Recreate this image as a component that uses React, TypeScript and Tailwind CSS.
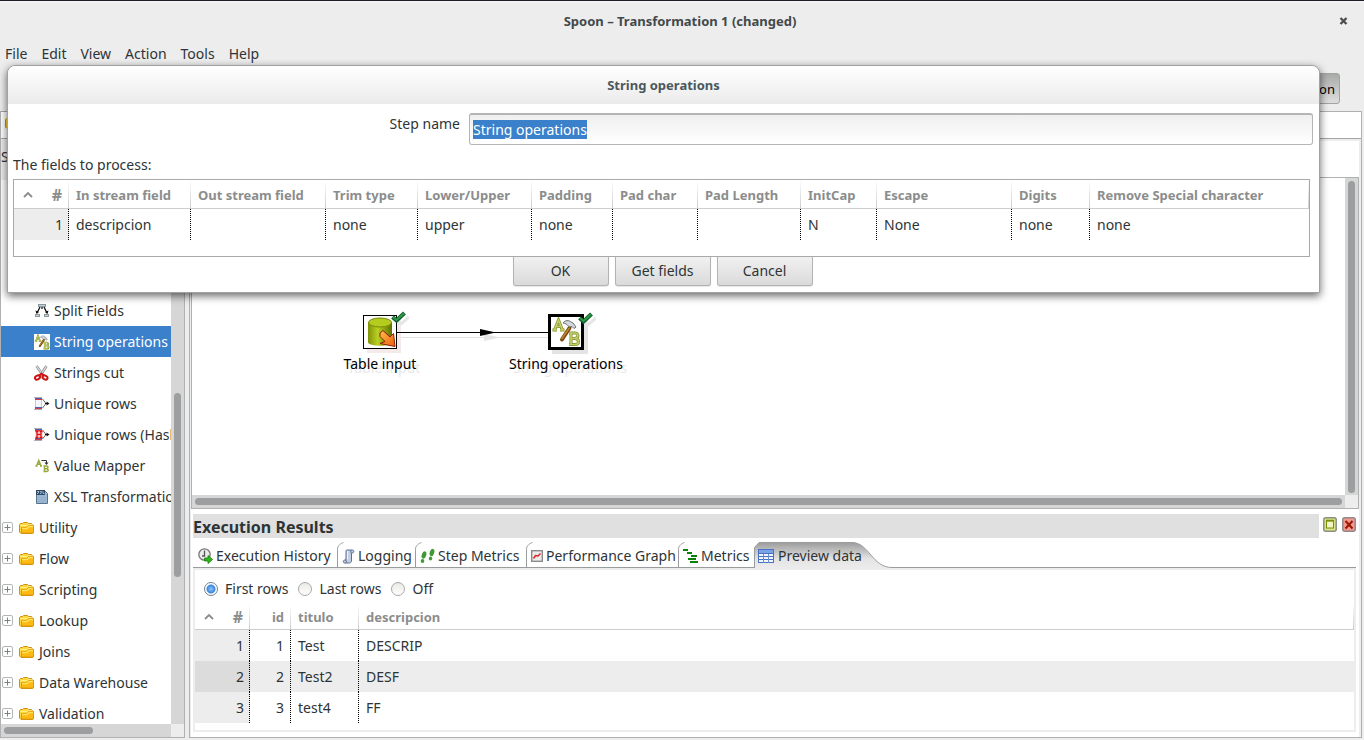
import { useEffect, useRef, type ReactNode } from "react";

function FolderIcon() {
  return (
    <svg width="16" height="14" viewBox="0 0 16 14" className="shrink-0" aria-hidden="true">
      <path d="M.5 11V3.500L1.500 2.500H3.500L4.500 1.500H8.500L9.500 2.500H12.500L13.500 4.500H14.500V11.500L13.500 12.500H2Z" fill="#ffd83c" stroke="#cf8f0c" />
      <path d="M1.500 4.500H7.500L9.500 3.500H12.500" fill="none" stroke="#fff08a" />
      <path d="M2.500 12V6.500H7.500L9.500 4.500H14.500V12Z" fill="#ffb914" stroke="#dd9a0c" />
      <path d="M3 7.500H8L10 5.500H14" fill="none" stroke="#ffe35c" strokeWidth="1.500" />
    </svg>
  );
}

function ExpanderIcon() {
  return (
    <svg width="11" height="11" viewBox="0 0 11 11" className="shrink-0" aria-hidden="true">
      <rect x=".5" y=".5" width="10" height="10" rx="1.5" fill="#fff" stroke="#b4b6b5" />
      <path d="M2.500 5.500H8.500M5.500 2.500V8.500" stroke="#7d7f7e" />
    </svg>
  );
}

function SplitIcon() {
  return (
    <svg width="16" height="16" viewBox="0 0 16 16" aria-hidden="true">
      <rect x="4.500" y="1.500" width="7" height="2" fill="#c9d2d8" stroke="#8b979e" />
      <path d="M6 4L3 10M10 4L13 10M8 4V6" stroke="#111" strokeWidth="1.300" />
      <path d="M1.500 7.500L5 9L2.500 11ZM14.500 7.500L11 9L13.500 11Z" fill="#111" />
      <rect x="1.500" y="11.500" width="4" height="2" fill="#c9d2d8" stroke="#8b979e" />
      <rect x="10.500" y="11.500" width="4" height="2" fill="#c9d2d8" stroke="#8b979e" />
    </svg>
  );
}

function StringOpsIcon({ size }: { size: number }) {
  return (
    <svg width={size} height={size} viewBox="0 0 30 30" className="bg-white" aria-hidden="true">
      <g fill="none" stroke="#7c8a30" strokeWidth="3">
        <path d="M3.500 13L7.500 3L11.500 13M5 9.500H10M1.500 13H6M9 13H13.500" />
        <path d="M20 16V27.500M18 16H24C28 16 28 21 23.500 21.500H20M23.500 21.500C29 22 28.500 27.500 24 27.500H18" />
      </g>
      <g fill="none" stroke="#c3cf62" strokeWidth="1.700">
        <path d="M3.500 13L7.500 3L11.500 13M5 9.500H10M1.500 13H6M9 13H13.500" />
        <path d="M20 16V27.500M18 16H24C28 16 28 21 23.500 21.500H20M23.500 21.500C29 22 28.500 27.500 24 27.500H18" />
      </g>
      <path d="M18.500 11L11 22.500" stroke="#7a4b10" strokeWidth="4" strokeLinecap="round" />
      <path d="M18 11.500L11 21.500" stroke="#b98432" strokeWidth="1.600" strokeLinecap="round" />
      <path d="M12 6C14 3 18 3 20 5L22 6L25 10L23 11.500L21 9.500L18 10C16 7 14.500 6.500 12 6Z" fill="#d5d9db" stroke="#6a7072" />
    </svg>
  );
}

function ScissorsIcon() {
  return (
    <svg width="16" height="16" viewBox="0 0 16 16" fill="none" aria-hidden="true">
      <path d="M2.500 1L9.500 11M12.500 1L6 11" stroke="#8b8f90" strokeWidth="2.600" />
      <path d="M2.500 1L9 10M12.500 1L6.500 10" stroke="#dfe2e3" strokeWidth="1.200" />
      <ellipse cx="3.500" cy="12.500" rx="2.600" ry="1.900" stroke="#cc1414" strokeWidth="2" transform="rotate(-28 3.500 12.500)" />
      <ellipse cx="11" cy="12.500" rx="2.600" ry="1.900" stroke="#cc1414" strokeWidth="2" transform="rotate(28 11 12.500)" />
      <path d="M4.500 11L7.500 8.500L10.500 11" stroke="#cc1414" strokeWidth="1.800" />
    </svg>
  );
}

function UniqueIcon({ hash }: { hash?: boolean }) {
  return (
    <svg width="16" height="16" viewBox="0 0 16 16" fill="none" aria-hidden="true">
      <rect x="1.500" y="1.500" width="6" height="12" fill="#f4f6fa" stroke="#c5cad3" />
      <path d="M0 1.500H8M0 13.500H8" stroke="#a8adb8" />
      <path d="M1 2.500H8M1 11.500H8" stroke="#4d62b5" />
      <path d="M1 3.500H8M1 12.500H8" stroke="#dc3a48" />
      <path d="M8.500 3L12 7.500L8.500 12" stroke="#666" />
      <path d="M11 7.500H13" stroke="#111" />
      <path d="M12.500 5.500L15.500 7.500L12.500 9.500Z" fill="#111" />
      {hash && (
        <>
          <rect x="1" y="4" width="8" height="7" fill="#ffe1e1" />
          <path d="M3 4.500V10.500M7 4.500V10.500M3 7.500H7M1.500 4.500H4.500M5.500 4.500H8.500M1.500 10.500H4.500M5.500 10.500H8.500" stroke="#df1010" strokeWidth="1.300" />
        </>
      )}
    </svg>
  );
}

function MapperIcon() {
  return (
    <svg width="16" height="16" viewBox="0 0 16 16" fill="none" aria-hidden="true">
      <path d="M2.500 8L4.800 2.500L7 8M3.500 6.200H6M1.500 8H3.500M6 8H8" stroke="#98a83a" strokeWidth="1.500" />
      <path d="M10.500 8V13.500M9.500 8H12.500C14.500 8 14.300 10.500 12.500 10.700H10.500M12.500 10.700C15 11 14.500 13.500 12.500 13.500H9.500" stroke="#98a83a" strokeWidth="1.500" />
      <path d="M7.500 2.500H12.500V5" stroke="#333" />
      <path d="M10.500 4.500H14.500L12.500 7Z" fill="#333" />
    </svg>
  );
}

function XslIcon() {
  return (
    <svg width="16" height="16" viewBox="0 0 16 16" fill="none" aria-hidden="true">
      <path d="M2.500 1.500H10.500L13.500 4.500V14.500H2.500Z" fill="#9db8d2" stroke="#56718c" />
      <rect x="2" y="1" width="9" height="5" fill="#2c4a66" />
      <path d="M3 2.500H5L4 4.500H3M6 2.500H7.500L7 4.500H6M9 2V4.500H10.500" stroke="#b9cede" strokeWidth=".8" />
      <path d="M4 8.500H12M4 10.500H12M4 12.500H12" stroke="#94afca" />
    </svg>
  );
}

function CheckBadge() {
  return (
    <svg width="18" height="18" viewBox="0 0 18 18" fill="none" className="absolute -top-[5px] left-[27px]" aria-hidden="true">
      <path d="M6 9L10 13L18 6" stroke="#e6e6e6" strokeWidth="3" />
      <path d="M1.500 6L5.500 9.500L13.500 2" stroke="#125c28" strokeWidth="4" />
      <path d="M2 6L5.500 9L13 2.500" stroke="#2c9b48" strokeWidth="2" />
    </svg>
  );
}

function TableInputIcon() {
  return (
    <svg width="32" height="32" viewBox="0 0 32 32" aria-hidden="true">
      <defs>
        <linearGradient id="cyl">
          <stop offset="0" stopColor="#7f9306" />
          <stop offset=".4" stopColor="#b9d023" />
          <stop offset="1" stopColor="#5f7000" />
        </linearGradient>
        <linearGradient id="arr" x1="0" y1="0" x2="1" y2="1">
          <stop offset="0" stopColor="#ffc04a" />
          <stop offset="1" stopColor="#ee5a0c" />
        </linearGradient>
      </defs>
      <path d="M4 6V26C4 31 28 31 28 26V6Z" fill="url(#cyl)" />
      <ellipse cx="16" cy="6.500" rx="11.500" ry="4.500" fill="#b5cc1f" stroke="#768a05" />
      <path d="M16 17L19 14.500L26 21L29.500 17.500L31 30.500L16 27.500L21 25.500L16 20.500Z" fill="url(#arr)" stroke="#8d1f06" />
    </svg>
  );
}

const treeSteps: { label: string; icon: ReactNode; selected?: boolean }[] = [
  { label: "Split Fields", icon: <SplitIcon /> },
  { label: "String operations", icon: <StringOpsIcon size={16} />, selected: true },
  { label: "Strings cut", icon: <ScissorsIcon /> },
  { label: "Unique rows", icon: <UniqueIcon /> },
  { label: "Unique rows (HashSet)", icon: <UniqueIcon hash /> },
  { label: "Value Mapper", icon: <MapperIcon /> },
  { label: "XSL Transformation", icon: <XslIcon /> },
];

const treeFolders = ["Utility", "Flow", "Scripting", "Lookup", "Joins", "Data Warehouse", "Validation"];

function StepTree() {
  return (
    <aside className="flex w-[185px] shrink-0 flex-col border border-t-0 border-[#b0b2b2] bg-[#ededed]">
      <div className="h-7 shrink-0 border-y border-[#a4a6a6] bg-white py-1 pl-1">
        <FolderIcon />
      </div>
      <div className="h-[41px] shrink-0 pt-2">Steps</div>
      <div className="flex min-h-0 flex-1">
        <div className="flex min-w-0 flex-1 flex-col">
          <ul className="min-h-0 flex-1 overflow-hidden bg-white pt-[115px]">
            {treeSteps.map((s) => (
              <li
                key={s.label}
                className={
                  s.selected
                    ? "flex h-[31px] items-center gap-1 whitespace-nowrap bg-[#3a80cb] pl-[33px] text-white"
                    : "flex h-[31px] items-center gap-1 whitespace-nowrap pl-[33px]"
                }
              >
                <span className="shrink-0">{s.icon}</span>
                {s.label}
              </li>
            ))}
            {treeFolders.map((f) => (
              <li key={f} className="flex h-[31px] items-center whitespace-nowrap pl-px">
                <ExpanderIcon />
                <span className="ml-1.5 mr-1">
                  <FolderIcon />
                </span>
                {f}
              </li>
            ))}
          </ul>
          <div className="h-[13px] shrink-0 bg-[#d6d6d6] px-[3px] py-[3px]">
            <div className="h-[7px] w-[89px] rounded-full bg-[#9c9ea0]" />
          </div>
        </div>
        <div className="flex w-[13px] shrink-0 flex-col">
          <div className="flex-1 bg-[#d6d6d6] px-[3px] pt-[213px]">
            <div className="h-[184px] rounded-full bg-[#9c9ea0]" />
          </div>
          <div className="h-[13px] bg-[#ededed]" />
        </div>
      </div>
    </aside>
  );
}

function Canvas() {
  return (
    <div className="flex h-[332px] shrink-0 flex-col border border-[#b0b2b2] bg-white">
      <div className="flex min-h-0 flex-1">
        <div className="relative min-w-0 flex-1 overflow-hidden text-black">
          <div className="absolute left-[128px] top-[137px] flex w-[120px] flex-col items-center">
            <div className="relative border border-black bg-white shadow-[4px_4px_0_#f4eaea]">
              <TableInputIcon />
              <CheckBadge />
            </div>
            <span className="mt-[5px] [text-shadow:4px_4px_0_#e9e9e9]">Table input</span>
          </div>
          <svg width="160" height="20" viewBox="0 0 160 20" className="absolute left-[204px] top-[145px]" aria-hidden="true">
            <path d="M5 14.500H152" stroke="#e4e4e4" />
            <path d="M88 11L104 14.500L88 18Z" fill="#e4e4e4" />
            <path d="M0 9.500H153" stroke="#000" />
            <path d="M84 6L100 9.500L84 13Z" fill="#000" />
          </svg>
          <div className="absolute left-[314px] top-[136px] flex w-[120px] flex-col items-center">
            <div className="relative border-3 border-black bg-white shadow-[4px_4px_0_#e4e4e4]">
              <StringOpsIcon size={30} />
              <CheckBadge />
            </div>
            <span className="mt-1 whitespace-nowrap [text-shadow:4px_4px_0_#e9e9e9]">String operations</span>
          </div>
        </div>
        <div className="w-[13px] bg-[#d6d6d6] p-[3px]">
          <div className="h-[312px] rounded-full bg-[#9c9ea0]" />
        </div>
      </div>
      <div className="flex h-[13px] shrink-0">
        <div className="flex-1 bg-[#d6d6d6] p-[3px]">
          <div className="h-[7px] rounded-full bg-[#9c9ea0]" />
        </div>
        <div className="w-[13px] bg-[#ededed]" />
      </div>
    </div>
  );
}

function HistoryIcon() {
  return (
    <svg width="15" height="16" viewBox="0 0 15 16" fill="none" aria-hidden="true">
      <circle cx="6.500" cy="6.500" r="5.700" fill="#ececec" stroke="#777" strokeWidth="1.300" />
      <path d="M6.500 2.500V8H4" stroke="#555" strokeWidth="1.300" />
      <path d="M6.500 10H10V7.500L14.500 11.500L10 15.500V13H6.500Z" fill="#2fb61a" stroke="#187a0c" strokeWidth=".8" />
    </svg>
  );
}

function LogIcon() {
  return (
    <svg width="13" height="15" viewBox="0 0 13 15" fill="none" aria-hidden="true">
      <path d="M4 2C4 .8 5 1 6 1H10.500C12.500 1 12 4 10.500 4H9.500V11C9.500 14 8 14 7 14H3C.5 14 .8 11 3 11H4Z" fill="#c3cfe2" stroke="#5b6f90" />
      <path d="M5.500 2V10.500" stroke="#f2f5fa" />
      <path d="M9.500 4C8.500 4 8.500 2 9.500 1.500M3 11C5 11 5 13.500 3.500 14" stroke="#5b6f90" />
    </svg>
  );
}

function FeetIcon() {
  return (
    <svg width="15" height="16" viewBox="0 0 15 16" fill="#3f9a35" aria-hidden="true">
      <ellipse cx="4" cy="7" rx="2.200" ry="3.800" transform="rotate(18 4 7)" />
      <ellipse cx="2.500" cy="13" rx="1.800" ry="2" />
      <ellipse cx="12" cy="4.500" rx="2.200" ry="3.800" transform="rotate(18 12 4.500)" />
      <ellipse cx="10.500" cy="10.500" rx="1.700" ry="2" />
    </svg>
  );
}

function GraphIcon() {
  return (
    <svg width="12" height="12" viewBox="0 0 12 12" fill="none" aria-hidden="true">
      <rect x=".7" y=".7" width="10.600" height="10.600" fill="#ececec" stroke="#8a8a8a" strokeWidth="1.400" />
      <path d="M2.500 8.500L4.500 5.500L7 6L9.500 3.500" stroke="#e02020" strokeWidth="1.400" />
    </svg>
  );
}

function MetricsIcon() {
  return (
    <svg width="15" height="14" viewBox="0 0 15 14" shapeRendering="crispEdges" stroke="#078307" strokeWidth="2" aria-hidden="true">
      <path d="M0 1H5M4 4H9M8 7H14M5 10H13M7 13H15" />
    </svg>
  );
}

function GridIcon() {
  return (
    <svg width="16" height="14" viewBox="0 0 16 14" shapeRendering="crispEdges" aria-hidden="true">
      <rect x="0" y="0" width="16" height="14" fill="#4a72c4" />
      <rect x="1" y="1" width="14" height="3" fill="#7aa3e6" />
      <path d="M1 6H15M1 9H15M1 12H15" stroke="#f2f6ff" strokeWidth="2" />
      <path d="M5.500 5V14M10.500 5V14" stroke="#6b8fd6" />
    </svg>
  );
}

function Tab({ width, icon, first, children }: { width: string; icon: ReactNode; first?: boolean; children: ReactNode }) {
  return (
    <button
      type="button"
      role="tab"
      aria-selected="false"
      className={`relative flex h-[26px] shrink-0 items-center gap-[3px] whitespace-nowrap border-b border-[#9a9c9c] pl-[5px] pt-[3px] ${width}`}
    >
      {!first && (
        <svg width="8" height="26" viewBox="0 0 8 26" fill="none" className="absolute left-0 top-0" aria-hidden="true">
          <path d="M.5 26V7.500C.5 3 4 1.500 6.500 .5" stroke="#9a9c9c" />
        </svg>
      )}
      {icon}
      {children}
    </button>
  );
}

const dividerTh =
  "h-[26px] border-b border-[#cdcdcd] bg-[linear-gradient(to_bottom,#ffffff,#cccccc)] bg-[length:1px_100%] bg-right bg-no-repeat px-[7px] pt-px text-left text-[13px] font-bold text-[#8b8d8c]";

function SortIcon() {
  return (
    <svg width="10" height="6" viewBox="0 0 10 6" fill="none" aria-hidden="true">
      <path d="M1 5L5 1L9 5" stroke="#8b8d8c" strokeWidth="1.800" />
    </svg>
  );
}

function RowNumberHeader() {
  return (
    <th className={dividerTh}>
      <span className="flex items-center justify-between pl-0.5">
        <SortIcon />
        <span className="text-base leading-5">#</span>
      </span>
    </th>
  );
}

const previewRows = [
  ["1", "1", "Test", "DESCRIP"],
  ["2", "2", "Test2", "DESF"],
  ["3", "3", "test4", "FF"],
];

function PreviewTable() {
  return (
    <table className="w-full table-fixed border-separate border-spacing-0">
      <colgroup>
        <col className="w-[55px]" />
        <col className="w-[41px]" />
        <col className="w-[68px]" />
        <col />
      </colgroup>
      <thead>
        <tr>
          <RowNumberHeader />
          <th className={dividerTh}>
            <span className="block text-right">id</span>
          </th>
          <th className={dividerTh}>titulo</th>
          <th className={dividerTh}>descripcion</th>
        </tr>
      </thead>
      <tbody>
        {previewRows.map(([n, id, title, desc]) => (
          <tr key={n} className="group h-[31px] even:bg-[#ededed]">
            <td className="border-r border-dotted border-black bg-[#ededed] pr-[5px] text-right group-even:bg-[#dcdcdc]">{n}</td>
            <td className="border-r border-dotted border-black pr-1.5 text-right">{id}</td>
            <td className="border-r border-dotted border-black px-[7px]">{title}</td>
            <td className="px-[7px]">{desc}</td>
          </tr>
        ))}
      </tbody>
    </table>
  );
}

function RowRadio({ label, checked }: { label: string; checked?: boolean }) {
  return (
    <label className="flex items-center gap-[7px]">
      <input
        type="radio"
        name="rows"
        defaultChecked={checked}
        className="h-3.5 w-3.5 appearance-none rounded-full border border-[#a9aba8] bg-linear-to-b from-[#e9e9e6] to-white checked:border-[#6f7f93] checked:bg-[radial-gradient(circle,#8ec2fa_0,#3d86dc_4px,#ffffff_5px)]"
      />
      {label}
    </label>
  );
}

function Results() {
  return (
    <section className="flex min-h-0 flex-1 flex-col pl-0.5 pr-[3px] pt-[5px]">
      <div className="flex items-center">
        <h2 className="h-6 flex-1 bg-[#e0e0e0] text-base font-bold leading-[26px]">Execution Results</h2>
        <div className="-mt-1 flex gap-[5px] pl-1">
          <button type="button" aria-label="Maximize">
            <svg width="14" height="15" viewBox="0 0 14 15" fill="none" className="block">
              <rect x=".8" y=".8" width="12.400" height="13.400" rx="2" fill="#d8e38a" stroke="#8b8f80" strokeWidth="1.500" />
              <rect x="3.500" y="4" width="7" height="7" fill="#f0f5c8" stroke="#7b8c00" />
              <path d="M3 3.500H11" stroke="#7b8c00" strokeWidth="1.500" />
            </svg>
          </button>
          <button type="button" aria-label="Close results">
            <svg width="14" height="15" viewBox="0 0 14 15" fill="none" className="block">
              <rect x=".8" y=".8" width="12.400" height="13.400" rx="2" fill="#f09a92" stroke="#94878a" strokeWidth="1.500" />
              <path d="M3.500 4L10.500 11.500M10.500 4L3.500 11.500" stroke="#9c1600" strokeWidth="2" />
            </svg>
          </button>
        </div>
      </div>
      <div role="tablist" className="mt-1 flex h-[26px]">
        <Tab width="w-[144px]" first icon={<HistoryIcon />}>Execution History</Tab>
        <Tab width="w-[78px]" icon={<LogIcon />}>Logging</Tab>
        <Tab width="w-[111px]" icon={<FeetIcon />}>Step Metrics</Tab>
        <Tab width="w-[152px]" icon={<GraphIcon />}>Performance Graph</Tab>
        <Tab width="w-[76px]" icon={<MetricsIcon />}>Metrics</Tab>
        <button type="button" role="tab" aria-selected="true" className="relative flex h-[26px] w-[138px] items-center whitespace-nowrap pl-1 pt-0.5">
          <svg width="138" height="28" viewBox="0 0 138 28" fill="none" className="absolute left-0 top-0" aria-hidden="true">
            <defs>
              <linearGradient id="tabfill" x1="0" y1="0" x2="0" y2="1">
                <stop offset="0" stopColor="#9c9c9c" />
                <stop offset=".6" stopColor="#e4e4e4" />
                <stop offset="1" stopColor="#ededed" />
              </linearGradient>
            </defs>
            <path d="M.5 26V5.500L5 .5H98C115 .5 118 25.500 138 25.500V28H.5Z" fill="url(#tabfill)" />
            <path d="M.5 26V5.500L5 .5H98C115 .5 118 25.500 138 25.500" stroke="#9a9c9c" />
          </svg>
          <span className="relative flex items-center gap-1">
            <GridIcon />
            Preview data
          </span>
        </button>
        <div className="flex-1 border-b border-[#9a9c9c]" />
      </div>
      <div className="mb-[5px] flex-1 border-2 border-[#ededed] bg-white">
        <div className="flex h-[34px] items-center gap-2.5 pl-[9px] pt-1">
          <RowRadio label="First rows" checked />
          <RowRadio label="Last rows" />
          <RowRadio label="Off" />
        </div>
        <PreviewTable />
      </div>
    </section>
  );
}

const fieldColumns: [string, string, string][] = [
  ["In stream field", "descripcion", "w-[122px]"],
  ["Out stream field", "", "w-[135px]"],
  ["Trim type", "none", "w-[92px]"],
  ["Lower/Upper", "upper", "w-[114px]"],
  ["Padding", "none", "w-[81px]"],
  ["Pad char", "", "w-[85px]"],
  ["Pad Length", "", "w-[103px]"],
  ["InitCap", "N", "w-[76px]"],
  ["Escape", "None", "w-[135px]"],
  ["Digits", "none", "w-[78px]"],
  ["Remove Special character", "none", "w-auto"],
];

const dialogButton =
  "h-[29px] w-24 rounded-b-[3px] border border-t-0 border-[#b2b4b3] bg-linear-to-b from-[#f1f1f1] to-[#dadada] shadow-[0_1px_1px_#e6e6e6]";

function StringOperationsDialog() {
  const nameRef = useRef<HTMLInputElement>(null);
  useEffect(() => {
    nameRef.current?.focus();
    nameRef.current?.select();
  }, []);
  return (
    <div
      role="dialog"
      aria-labelledby="dialog-title"
      className="absolute left-[7px] right-11 top-16 rounded-t-lg border border-[#a0a2a1] bg-white shadow-[0_3px_8px_rgba(0,0,0,0.6)]"
    >
      <h2
        id="dialog-title"
        className="h-[38px] rounded-t-lg bg-linear-to-b from-white to-[#ebebeb] text-center text-[13px] font-bold leading-[38px] text-[#4b585d]"
      >
        String operations
      </h2>
      <div className="px-[5px] pb-1.5">
        <div className="flex pt-[9px]">
          <label htmlFor="step-name" className="w-[447px] pt-px text-right">
            Step name
          </label>
          <input
            id="step-name"
            ref={nameRef}
            defaultValue="String operations"
            className="ml-[9px] mr-px h-8 min-w-0 flex-1 rounded-[3px] border border-t-2 border-[#b4b6b5] bg-linear-to-b from-[#efefef] to-white px-[3px] leading-[22px] outline-none selection:bg-[#3a80cb] selection:text-white"
          />
        </div>
        <p className="mt-2.5">The fields to process:</p>
        <div className="mr-1 mt-1 h-[78px] border border-[#a8aaa9]">
          <table className="w-full table-fixed border-separate border-spacing-0">
            <colgroup>
              <col className="w-[55px]" />
              {fieldColumns.map(([name, , w]) => (
                <col key={name} className={w} />
              ))}
            </colgroup>
            <thead>
              <tr className="h-[29px]">
                <RowNumberHeader />
                {fieldColumns.map(([name]) => (
                  <th key={name} className={dividerTh}>
                    {name}
                  </th>
                ))}
              </tr>
            </thead>
            <tbody>
              <tr className="h-[31px]">
                <td className="border-r border-dotted border-black bg-[#ededed] pr-[5px] text-right">1</td>
                {fieldColumns.map(([name, value]) => (
                  <td key={name} className="border-r border-dotted border-black px-[7px] last:border-r-0">
                    {value}
                  </td>
                ))}
              </tr>
            </tbody>
          </table>
        </div>
        <div className="flex justify-center gap-1.5 pr-0.5">
          <button type="button" className={dialogButton}>OK</button>
          <button type="button" className={dialogButton}>Get fields</button>
          <button type="button" className={dialogButton}>Cancel</button>
        </div>
      </div>
    </div>
  );
}

export default function App() {
  return (
    <div className="relative flex h-screen flex-col overflow-hidden border-t border-[#1e2027] bg-[#ededed] font-['Noto_Sans','Open_Sans',sans-serif] text-sm leading-5 text-[#2e3436]">
      <header className="relative h-10 border-t-2 border-[#f6f1f7] pr-1 text-center text-[13px] font-bold leading-9 text-[#43494b]">
        Spoon – Transformation 1 (changed)
        <button type="button" aria-label="Close" className="absolute right-4 top-3.5">
          <svg width="9" height="8" viewBox="0 0 9 8" fill="none" className="block">
            <path d="M1.500 1L7.500 7M7.500 1L1.500 7" stroke="#4b504e" strokeWidth="2.400" />
          </svg>
        </button>
      </header>
      <nav className="flex h-6 items-center gap-[14px] pl-[5px] pt-0.5">
        <button type="button">File</button>
        <button type="button">Edit</button>
        <button type="button">View</button>
        <button type="button">Action</button>
        <button type="button">Tools</button>
        <button type="button">Help</button>
      </nav>
      <div className="flex h-[46px] items-start justify-end pr-6 pt-2">
        <button type="button" className="h-[31px] rounded-[3px] border border-[#a2a4a3] bg-linear-to-b from-[#a9aba9] to-[#dedede] px-1 text-[13px] text-black">
          Data Integration
        </button>
      </div>
      <div className="flex min-h-0 flex-1 gap-1 pb-0.5 pr-0.5">
        <StepTree />
        <main className="flex min-w-0 flex-1 flex-col border border-[#b0b2b2] bg-white">
          <div className="h-[27px] shrink-0 border-b border-[#a4a6a6]" />
          <div className="flex min-h-0 flex-1 flex-col border-r-2 border-l border-[#ededed]">
            <div className="h-[38px] shrink-0 border-t-2 border-[#ededed]" />
            <Canvas />
            <Results />
          </div>
        </main>
      </div>
      <StringOperationsDialog />
    </div>
  );
}
